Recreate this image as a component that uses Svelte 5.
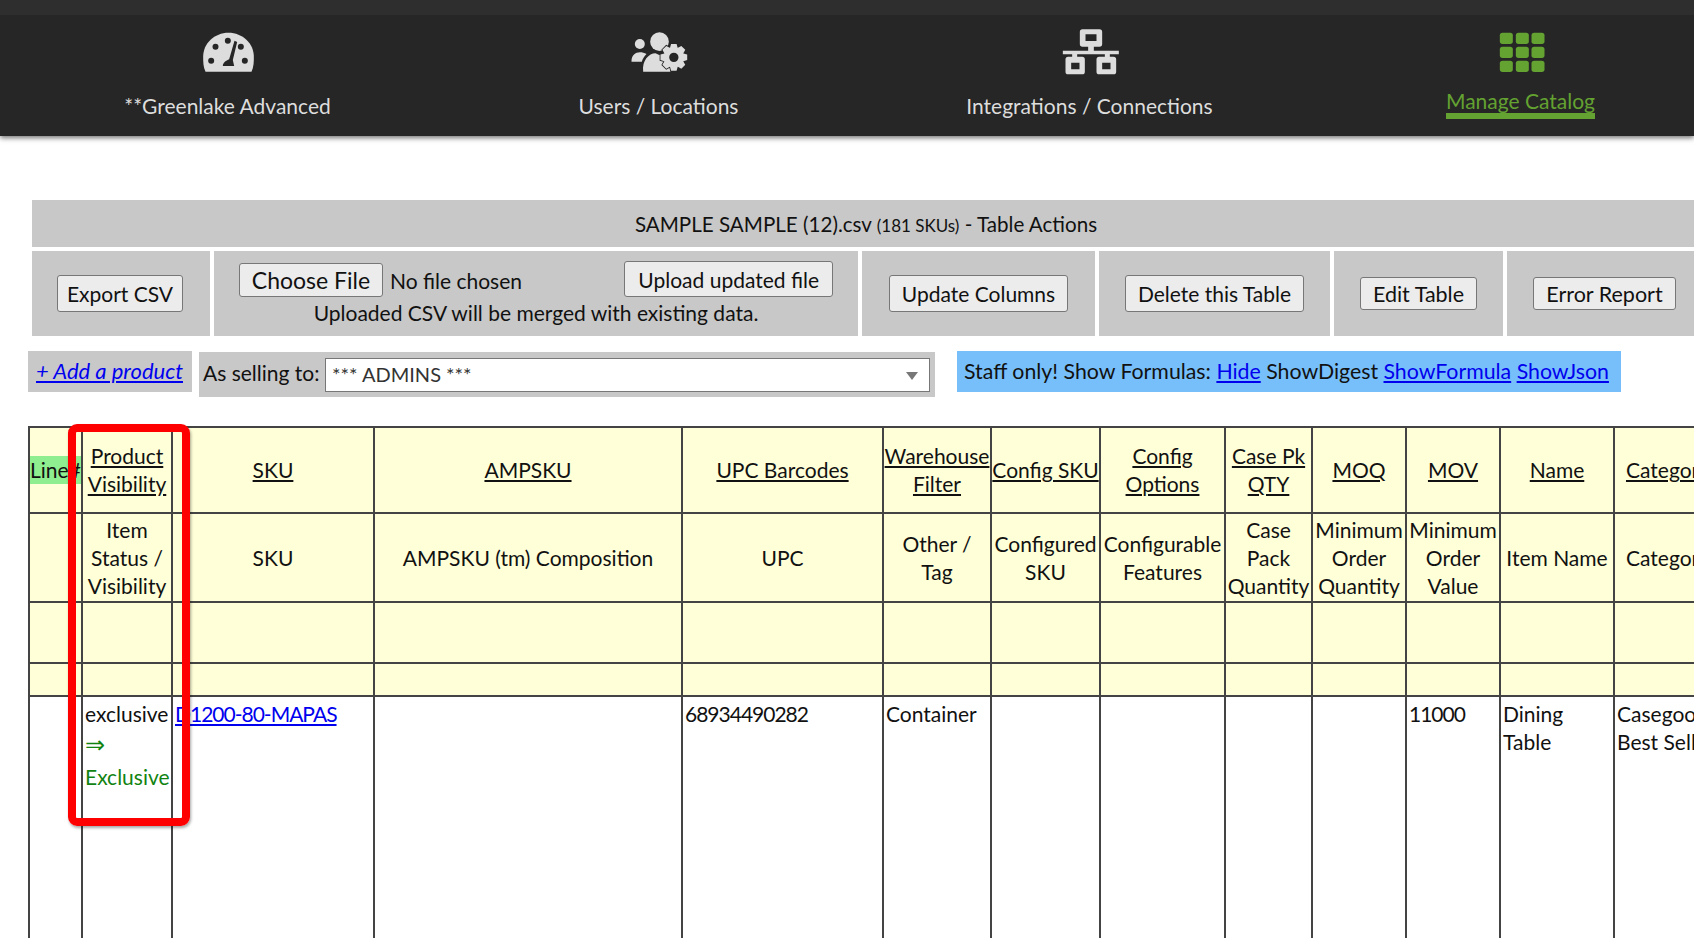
<script>
  const widths = [53, 90, 202, 308, 201, 108, 109, 125, 87, 94, 94, 114, 108];
  const head = [
    ['Line#', 'Product<br>Visibility', 'SKU', 'AMPSKU', 'UPC Barcodes', 'Warehouse<br>Filter', 'Config SKU', 'Config<br>Options', 'Case Pk<br>QTY', 'MOQ', 'MOV', 'Name', 'Category'],
    ['', 'Item<br>Status /<br>Visibility', 'SKU', 'AMPSKU (tm) Composition', 'UPC', 'Other /<br>Tag', 'Configured<br>SKU', 'Configurable<br>Features', 'Case<br>Pack<br>Quantity', 'Minimum<br>Order<br>Quantity', 'Minimum<br>Order<br>Value', 'Item Name', 'Category']
  ];

  function gear(cx, cy, outer, inner, hole, teeth) {
    let d = '';
    const step = (Math.PI * 2) / teeth;
    for (let i = 0; i < teeth; i++) {
      const a = i * step - step / 2;
      const pts = [
        [inner, a + step * 0.02],
        [outer, a + step * 0.24],
        [outer, a + step * 0.76],
        [inner, a + step * 0.98]
      ];
      for (const [r, t] of pts) {
        d += (d === '' ? 'M' : 'L') + (cx + r * Math.cos(t)).toFixed(1) + ' ' + (cy + r * Math.sin(t)).toFixed(1);
      }
    }
    d += 'Z';
    d += `M${cx + hole} ${cy}A${hole} ${hole} 0 1 0 ${cx - hole} ${cy}A${hole} ${hole} 0 1 0 ${cx + hole} ${cy}Z`;
    return d;
  }
  const gearPath = gear(160, 112, 41, 31, 14, 8);
</script>

<div class="page">
  <header class="nav">
    <div class="item">
      <svg width="80" height="60" viewBox="-7.500 0 240 180">
        <path fill="#ddd" d="M45 155C38 140 38 125 38 110 38 70 72 38 114 38 156 38 190 70 190 110 190 125 190 140 183 155Z"/>
        <g fill="#262626">
          <circle cx="62" cy="122" r="9"/><circle cx="75" cy="80" r="9"/><circle cx="112" cy="62" r="9"/><circle cx="151" cy="80" r="9"/><circle cx="163" cy="122" r="9"/>
          <path d="M132 62L140 66 127 120 131 138H97C97 128 107 122 116 118Z"/>
        </g>
      </svg>
      <span class="lab">**Greenlake Advanced</span>
    </div>
    <div class="item">
      <svg width="80" height="60" viewBox="-4.500 0 240 180">
        <g fill="#ddd">
          <circle cx="117" cy="65" r="28"/>
          <circle cx="58" cy="72" r="15"/>
          <path d="M33 125C33 105 45 97 58 97 65 97 72 99 78 102 70 110 66 118 64 125Z"/>
          <path d="M68 155C64 122 85 100 105 100 118 108 130 108 142 100L150 155Z"/>
        </g>
        <path d={gearPath} fill="#ddd" fill-rule="evenodd" stroke="#262626" stroke-width="5" paint-order="stroke"/>
      </svg>
      <span class="lab">Users / Locations</span>
    </div>
    <div class="item">
      <svg width="80" height="60" viewBox="-1.500 0 240 180">
        <g fill="#ddd" fill-rule="evenodd">
          <path d="M96 28H147A8 8 0 0 1 155 36V72A8 8 0 0 1 147 80H130V92H205V103H178V110H189A8 8 0 0 1 197 118V155A8 8 0 0 1 189 163H146A8 8 0 0 1 138 155V118A8 8 0 0 1 146 110H163V103H80V110H95A8 8 0 0 1 103 118V155A8 8 0 0 1 95 163H53A8 8 0 0 1 45 155V118A8 8 0 0 1 53 110H65V103H37V92H113V80H96A8 8 0 0 1 88 72V36A8 8 0 0 1 96 28ZM105 43V63H138V43ZM62 128V148H87V128ZM155 128V148H180V128Z"/>
        </g>
      </svg>
      <span class="lab">Integrations / Connections</span>
    </div>
    <div class="item">
      <svg width="80" height="60" viewBox="1.500 0 240 180">
        <g fill="#64a231">
          {#each [38, 80, 122] as y}
            {#each [58, 106, 153] as x}
              <rect {x} {y} width="39" height="34" rx="8" />
            {/each}
          {/each}
        </g>
      </svg>
      <span class="lab active">Manage Catalog</span>
    </div>
  </header>

  <main class="content">
    <div class="title"><span>SAMPLE SAMPLE (12).csv <small>(181 SKUs)</small> - Table Actions</span></div>
    <div class="actions">
      <div class="cell c1"><button class="btn">Export CSV</button></div>
      <div class="cell upload">
        <div class="row">
          <button class="choose">Choose File</button>
          <span class="nofile">No file chosen</span>
          <button class="btn up">Upload updated file</button>
        </div>
        <div class="note">Uploaded CSV will be merged with existing data.</div>
      </div>
      <div class="cell c3"><button class="btn wide">Update Columns</button></div>
      <div class="cell c4"><button class="btn wide">Delete this Table</button></div>
      <div class="cell c5"><button class="btn sm">Edit Table</button></div>
      <div class="cell c6"><button class="btn sm">Error Report</button></div>
    </div>

    <div class="tools">
      <div class="add"><a href="#a">+ Add a product</a></div>
      <div class="selling">
        <span>As selling to:</span>
        <div class="select">*** ADMINS ***<i></i></div>
      </div>
      <div class="staff"><span>Staff only! Show Formulas: <a href="#h">Hide</a> ShowDigest <a href="#f">ShowFormula</a> <a href="#j">ShowJson</a></span></div>
    </div>

    <table>
      <colgroup>{#each widths as w}<col style="width:{w}px" />{/each}</colgroup>
      <tbody>
        <tr class="h1">
          {#each head[0] as c, i}
            <th>{#if i === 0}<span class="line">{c}</span>{:else}<u>{@html c}</u>{/if}</th>
          {/each}
        </tr>
        <tr class="h2">{#each head[1] as c}<th>{@html c}</th>{/each}</tr>
        <tr class="h3">{#each widths as _}<th></th>{/each}</tr>
        <tr class="h4">{#each widths as _}<th></th>{/each}</tr>
        <tr class="data">
          <td></td>
          <td class="status">exclusive<br /><span class="g"><span class="arrow">⇒</span><br />Exclusive</span></td>
          <td><a class="num" href="#s">D1200-80-MAPAS</a></td>
          <td></td>
          <td><span class="num">68934490282</span></td>
          <td>Container</td>
          <td></td><td></td><td></td><td></td>
          <td><span class="num">11000</span></td>
          <td>Dining<br />Table</td>
          <td class="nowrap">Casegoods<br />Best Sellers</td>
        </tr>
      </tbody>
    </table>
  </main>

  <div class="mark"></div>
</div>

<style>
  :global(body) { margin: 0; background: #fff; overflow: hidden; }
  .page { position: relative; width: 1694px; height: 938px; overflow: hidden; font-family: "Lato", "Noto Sans", sans-serif; font-size: 21px; color: #111; }
  .nav { height: 121px; background: #262626; border-top: 15px solid #2e2e2e; box-shadow: 0 2px 5px rgba(0,0,0,.55); display: grid; grid-template-columns: repeat(4, 431px); padding-left: 12px; color: #ddd; }
  .item { display: flex; flex-direction: column; align-items: center; padding-top: 5px; }
  .item svg { display: block; flex: none; }
  .lab { margin-top: 13px; font-size: 21px; line-height: 26px; }
  .active { color: #64a231; margin-top: 8px; border-bottom: 6px solid #64a231; line-height: 25px; }

  .content { padding: 64px 0 0 32px; }
  .title { height: 47px; background: #c8c8c8; display: flex; align-items: center; justify-content: center; margin-bottom: 4px; padding-left: 6px; font-size: 20.600px; }
  .title small { font-size: 17px; }
  .actions { display: flex; gap: 4px; height: 85px; }
  .cell { background: #c8c8c8; display: flex; align-items: center; justify-content: center; flex: none; box-sizing: border-box; }
  .c1 { width: 178px; padding-right: 2px; }
  .c3 { width: 233px; }
  .c4 { width: 231px; }
  .c5 { width: 169px; }
  .c6 { width: 187px; padding-left: 8px; }
  .btn, .choose { font: inherit; background: #ececec; border: 1px solid #777; border-radius: 3px; color: #111; box-sizing: border-box; white-space: nowrap; }
  .btn { height: 37px; padding: 0 9px; font-size: 21px; }
  .btn.wide { padding: 0 12px; }
  .btn.sm { height: 33px; padding: 0 12px; font-size: 21.500px; }
  .upload { width: 644px; flex-direction: column; align-items: stretch; justify-content: flex-start; padding: 10px 25px 0 25px; }
  .row { display: flex; align-items: flex-start; }
  .choose { height: 34px; width: 144px; padding: 0; margin-top: 2px; font-size: 23px; }
  .nofile { margin-left: 7px; line-height: 36px; margin-top: 2px; }
  .up { margin-left: auto; padding: 0 13px; height: 36px; }
  .note { text-align: center; line-height: 26px; margin-top: 1px; }

  .tools { display: flex; align-items: flex-start; margin-top: 15px; margin-left: -4px; height: 46px; }
  .add { background: #c8c8c8; width: 164px; height: 41px; padding: 0 0 2px 8px; box-sizing: border-box; display: flex; align-items: center; font-style: italic; font-size: 22px; white-space: nowrap; }
  .selling { background: #c8c8c8; width: 736px; height: 45px; margin-left: 7px; margin-top: 1px; display: flex; align-items: center; justify-content: space-between; padding: 0 5px 0 4px; box-sizing: border-box; }
  .selling span { line-height: 26px; margin-top: -4px; }
  .select { position: relative; width: 605px; height: 34px; background: #fff; border: 1px solid #777; box-sizing: border-box; line-height: 31px; padding-left: 6px; font-size: 20px; color: #333; }
  .select i { position: absolute; right: 11px; top: 13px; border-left: 6px solid transparent; border-right: 6px solid transparent; border-top: 8px solid #777; }
  .staff { background: #77bffa; width: 664px; height: 41px; margin-left: 22px; padding: 0 0 2px 7px; box-sizing: border-box; display: flex; align-items: center; white-space: nowrap; font-size: 21.300px; }
  a { color: #0000ee; }

  table { margin-top: 29px; margin-left: -4px; border-collapse: collapse; table-layout: fixed; width: 1693px; }
  th, td { border: 2px solid #444; padding: 0; }
  th { background: #ffffd8; font-weight: 400; text-align: center; line-height: 28px; white-space: nowrap; overflow: hidden; }
  .h1 th { height: 84px; }
  .h2 th { height: 87px; }
  .h3 th { height: 59px; }
  .h4 th { height: 31px; }
  .data td { height: 300px; vertical-align: top; padding: 3px 2px 0; line-height: 28px; background: #fff; overflow: visible; }
  .data td.status { line-height: 31px; padding-top: 1px; }
  .nowrap { white-space: nowrap; }
  .line { background: #8fee8f; display: block; text-align: left; line-height: 28px; }
  .g { color: #118311; }
  .arrow { font-family: "DejaVu Sans", sans-serif; font-size: 24px; line-height: 31px; }
  .num { letter-spacing: -1px; }

  .mark { position: absolute; left: 68px; top: 424px; width: 122px; height: 402px; box-sizing: border-box; border: 8px solid #fe0000; border-radius: 9px; box-shadow: 1px 2px 3px rgba(0,0,0,.35); }
</style>
